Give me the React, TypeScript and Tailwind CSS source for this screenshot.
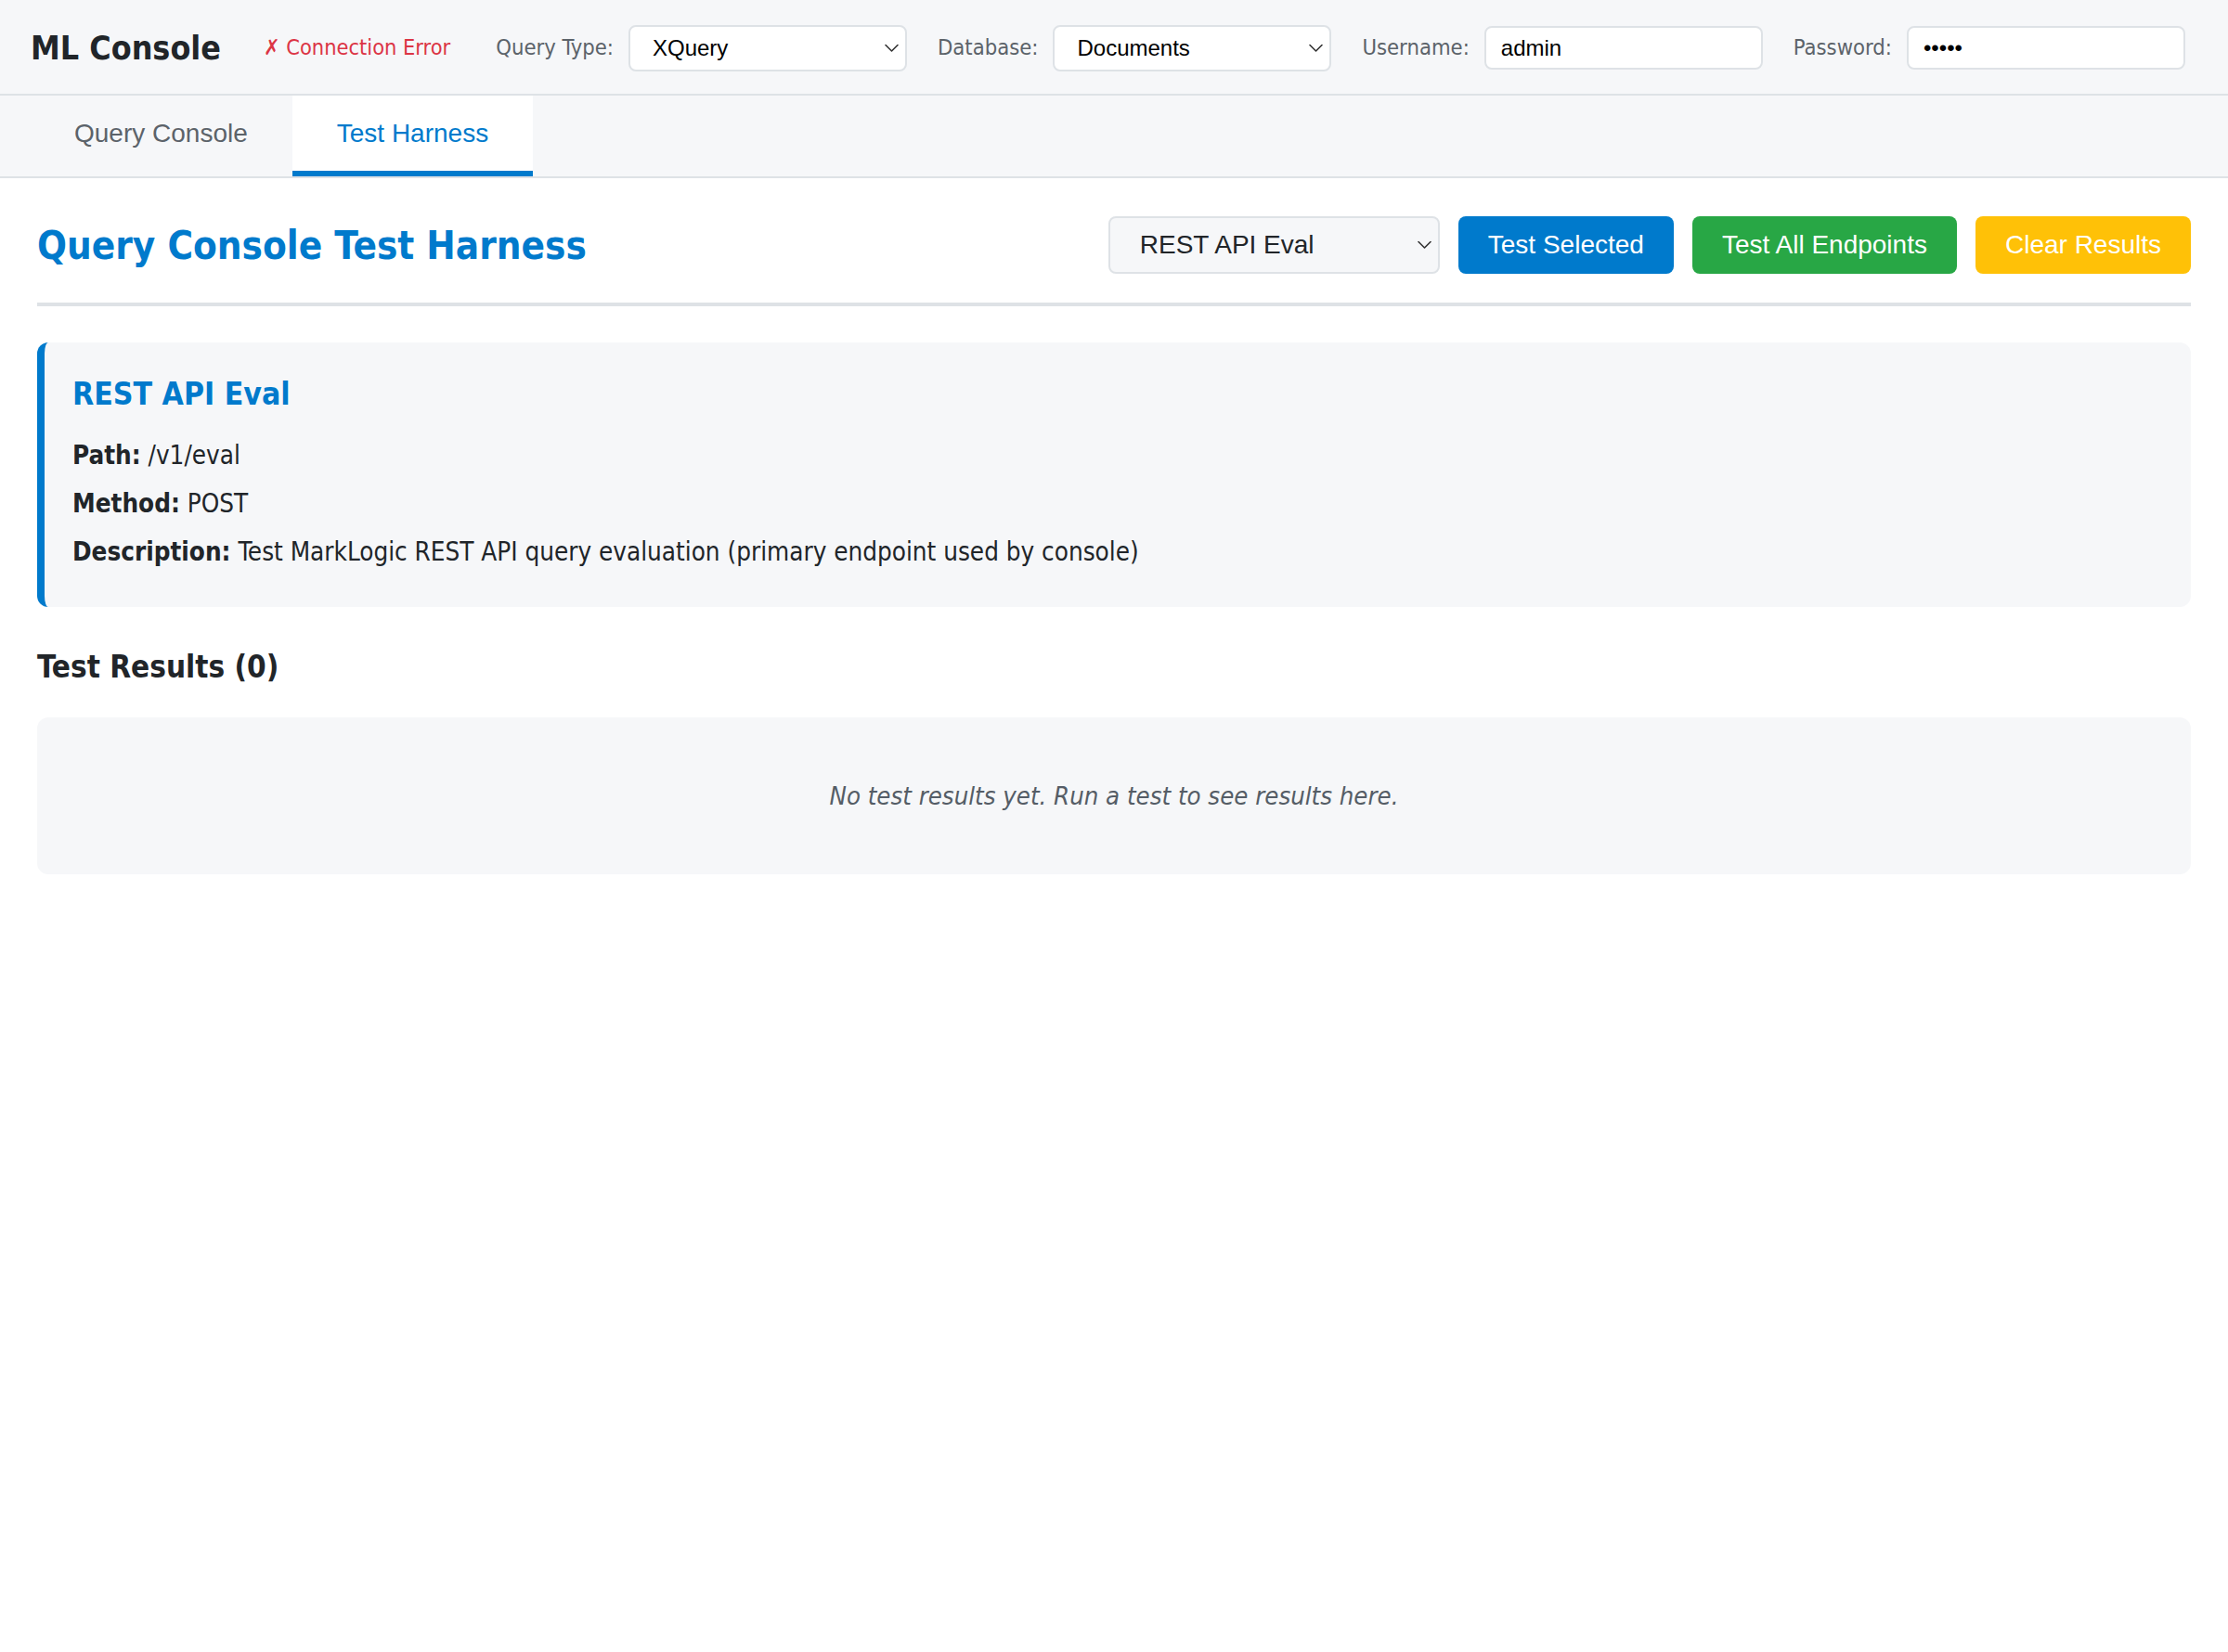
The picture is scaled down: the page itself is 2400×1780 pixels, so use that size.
import React from "react";

const body = "font-['DejaVu_Sans_Condensed','DejaVu_Sans',sans-serif]";
const arial = "font-['Liberation_Sans',Arial,sans-serif]";

function Chevron({ className }: { className: string }) {
  return (
    <svg
      className={"pointer-events-none absolute top-1/2 -translate-y-1/2 " + className}
      width="15"
      height="9"
      viewBox="0 0 15 9"
      fill="none"
    >
      <polyline points="1,1 7.5,7.5 14,1" stroke="#333" strokeWidth="1.6" strokeLinecap="round" strokeLinejoin="round" />
    </svg>
  );
}

function HeaderSelect({ value, options }: { value: string; options: string[] }) {
  return (
    <div className="relative w-[300px] h-[50px]">
      <select
        defaultValue={value}
        className={`${arial} appearance-none w-full h-full bg-white border-2 border-[#dee2e6] rounded-[8px] pl-[24px] pr-[30px] text-[24px] text-black outline-none`}
      >
        {options.map((o) => (
          <option key={o}>{o}</option>
        ))}
      </select>
      <Chevron className="right-[9px]" />
    </div>
  );
}

function HeaderInput({ value, type }: { value: string; type: string }) {
  return (
    <input
      type={type}
      defaultValue={value}
      readOnly
      className={`${arial} w-[300px] h-[47px] bg-white border-2 border-[#dee2e6] rounded-[8px] px-[16px] text-[24px] text-black outline-none`}
    />
  );
}

export default function App() {
  return (
    <div className={`${body} min-h-screen w-full bg-white text-[#212529]`}>
      {/* Header */}
      <header className="h-[103px] bg-[#f6f7f9] border-b-2 border-[#dee2e6] flex items-center pl-[33px] pt-[2px]">
        <div className="text-[35.5px] font-bold text-[#212529] mr-[46px]">ML Console</div>
        <div className="text-[23.4px] text-[#dc3545] mr-[49px]">✗ Connection Error</div>
        <div className="flex items-center gap-[33px]">
          <div className="flex items-center gap-[16px]">
            <span className="text-[23.6px] text-[#5c636a]">Query Type:</span>
            <HeaderSelect value="XQuery" options={["XQuery", "JavaScript", "SPARQL", "SQL"]} />
          </div>
          <div className="flex items-center gap-[16px]">
            <span className="text-[23.6px] text-[#5c636a]">Database:</span>
            <HeaderSelect value="Documents" options={["Documents", "Modules", "Security"]} />
          </div>
          <div className="flex items-center gap-[16px]">
            <span className="text-[23.6px] text-[#5c636a]">Username:</span>
            <HeaderInput type="text" value="admin" />
          </div>
          <div className="flex items-center gap-[16px]">
            <span className="text-[23.6px] text-[#5c636a]">Password:</span>
            <HeaderInput type="password" value="admin" />
          </div>
        </div>
      </header>

      {/* Tabs */}
      <nav className="h-[89px] bg-[#f6f7f9] border-b-2 border-[#dee2e6] flex pl-[32px]">
        <button className={`${arial} h-full px-[48px] text-[28px] text-[#5c636a] border-b-[6px] border-transparent`}>
          Query Console
        </button>
        <button className={`${arial} h-full px-[48px] text-[28px] text-[#007acc] bg-white border-b-[6px] border-[#007acc]`}>
          Test Harness
        </button>
      </nav>

      {/* Main */}
      <main className="px-[40px] pt-[41px]">
        <div className="flex items-center justify-between h-[97px] pb-[31px] border-b-4 border-[#dee2e6]">
          <h1 className="text-[41.8px] font-bold text-[#007acc] leading-[60px] pt-[2px]">Query Console Test Harness</h1>
          <div className="flex items-center gap-[20px]">
            <div className="relative w-[357px] h-[62px]">
              <select
                defaultValue="REST API Eval"
                className={`${arial} appearance-none w-full h-full bg-[#f6f7f9] border-2 border-[#dee2e6] rounded-[8px] pl-[32px] pr-[36px] text-[28px] text-[#212529] outline-none`}
              >
                <option>REST API Eval</option>
                <option>REST API Documents</option>
                <option>REST API Search</option>
              </select>
              <Chevron className="right-[9px]" />
            </div>
            <button className={`${arial} h-[62px] px-[32px] rounded-[8px] bg-[#007acc] text-white text-[28px]`}>
              Test Selected
            </button>
            <button className={`${arial} h-[62px] px-[32px] rounded-[8px] bg-[#28a745] text-white text-[28px]`}>
              Test All Endpoints
            </button>
            <button className={`${arial} h-[62px] px-[32px] rounded-[8px] bg-[#ffc107] text-white text-[28px]`}>
              Clear Results
            </button>
          </div>
        </div>

        <section className="mt-[39px] bg-[#f6f7f9] border-l-[8px] border-[#007acc] rounded-[12px] pl-[30px] pr-[32px] pt-[34px] pb-[41px]">
          <h2 className="text-[33.5px] font-bold text-[#007acc] leading-[44px] mb-[26px]">REST API Eval</h2>
          <div className="flex flex-col gap-[16px] text-[27.6px] leading-[36px] text-[#212529]">
            <p>
              <strong className="font-bold">Path:</strong> /v1/eval
            </p>
            <p>
              <strong className="font-bold">Method:</strong> POST
            </p>
            <p>
              <strong className="font-bold">Description:</strong> Test MarkLogic REST API query evaluation (primary endpoint used by console)
            </p>
          </div>
        </section>

        <h3 className="mt-[47px] mb-[36px] text-[33px] font-bold leading-[36px] text-[#212529]">Test Results (0)</h3>

        <div className="h-[169px] bg-[#f6f7f9] rounded-[12px] flex items-center justify-center pt-[2px]">
          <p className="italic text-[27.3px] text-[#555d66]">No test results yet. Run a test to see results here.</p>
        </div>
      </main>
    </div>
  );
}
